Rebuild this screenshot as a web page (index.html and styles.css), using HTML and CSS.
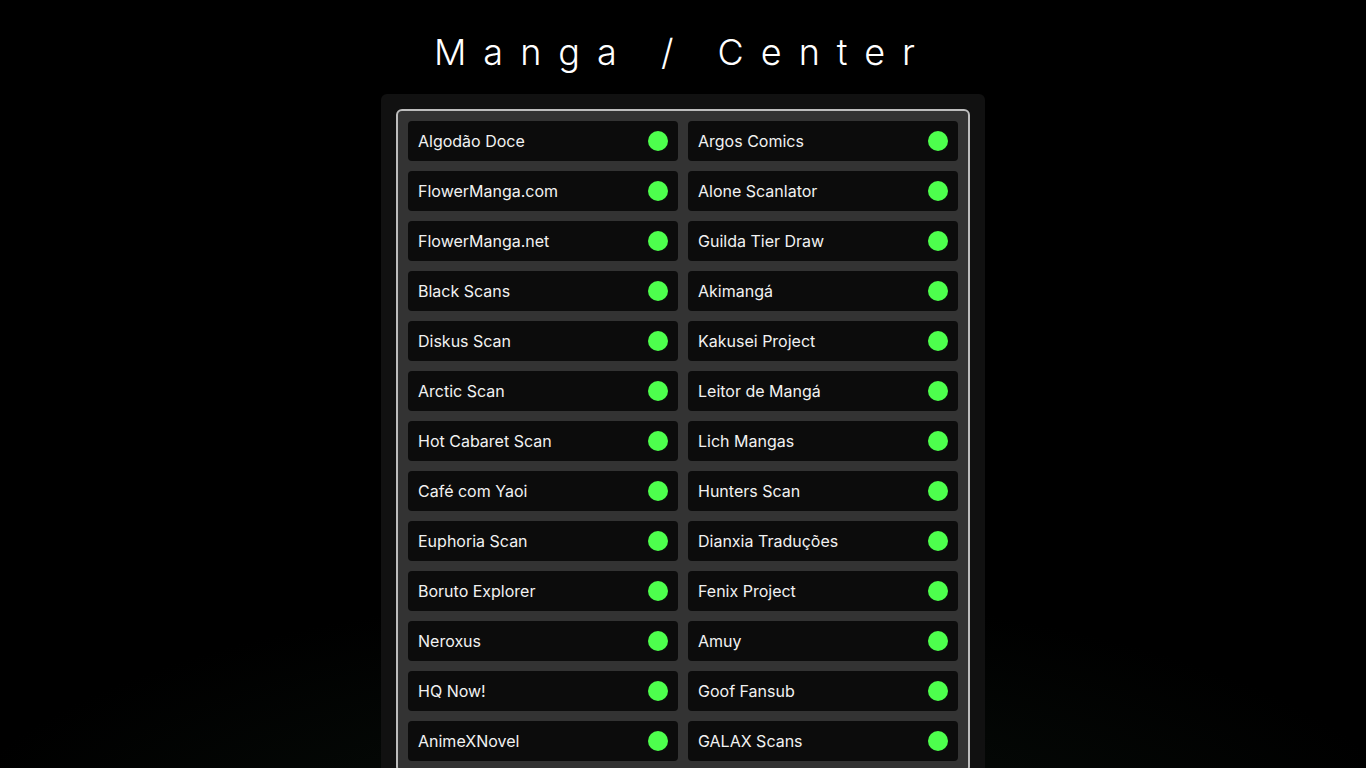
FILE: index.html
```html
<!DOCTYPE html>
<html lang="pt-BR">
<head>
<meta charset="utf-8">
<title>Manga / Center</title>
<link rel="stylesheet" href="styles.css">
</head>
<body>
<header class="header"><h1 class="title">Manga / Center</h1></header>
<main class="panel">
  <div class="box">
    <ul class="grid">
      <li class="item"><span class="name">Algodão Doce</span><span class="dot"></span></li>
      <li class="item"><span class="name">Argos Comics</span><span class="dot"></span></li>
      <li class="item"><span class="name">FlowerManga.com</span><span class="dot"></span></li>
      <li class="item"><span class="name">Alone Scanlator</span><span class="dot"></span></li>
      <li class="item"><span class="name">FlowerManga.net</span><span class="dot"></span></li>
      <li class="item"><span class="name">Guilda Tier Draw</span><span class="dot"></span></li>
      <li class="item"><span class="name">Black Scans</span><span class="dot"></span></li>
      <li class="item"><span class="name">Akimangá</span><span class="dot"></span></li>
      <li class="item"><span class="name">Diskus Scan</span><span class="dot"></span></li>
      <li class="item"><span class="name">Kakusei Project</span><span class="dot"></span></li>
      <li class="item"><span class="name">Arctic Scan</span><span class="dot"></span></li>
      <li class="item"><span class="name">Leitor de Mangá</span><span class="dot"></span></li>
      <li class="item"><span class="name">Hot Cabaret Scan</span><span class="dot"></span></li>
      <li class="item"><span class="name">Lich Mangas</span><span class="dot"></span></li>
      <li class="item"><span class="name">Café com Yaoi</span><span class="dot"></span></li>
      <li class="item"><span class="name">Hunters Scan</span><span class="dot"></span></li>
      <li class="item"><span class="name">Euphoria Scan</span><span class="dot"></span></li>
      <li class="item"><span class="name">Dianxia Traduções</span><span class="dot"></span></li>
      <li class="item"><span class="name">Boruto Explorer</span><span class="dot"></span></li>
      <li class="item"><span class="name">Fenix Project</span><span class="dot"></span></li>
      <li class="item"><span class="name">Neroxus</span><span class="dot"></span></li>
      <li class="item"><span class="name">Amuy</span><span class="dot"></span></li>
      <li class="item"><span class="name">HQ Now!</span><span class="dot"></span></li>
      <li class="item"><span class="name">Goof Fansub</span><span class="dot"></span></li>
      <li class="item"><span class="name">AnimeXNovel</span><span class="dot"></span></li>
      <li class="item"><span class="name">GALAX Scans</span><span class="dot"></span></li>
    </ul>
  </div>
</main>
</body>
</html>
```
FILE: styles.css
```css
* { box-sizing: border-box; }
html, body { margin: 0; padding: 0; }
body {
  min-height: 100vh;
  background-color: #000;
  background-image: radial-gradient(ellipse 55% 35% at 50% 112%, rgba(14, 26, 18, 0.6), rgba(0, 0, 0, 0) 100%);
  background-attachment: fixed;
  font-family: "Inter", "Noto Sans", sans-serif;
  color: #f0f0f0;
}
.header {
  padding-top: 30px;
  margin-bottom: 20px;
  text-align: center;
}
.title {
  margin: 0;
  font-size: 36px;
  line-height: 44px;
  font-weight: 300;
  letter-spacing: 17px;
  color: #fff;
}
.panel {
  width: 604px;
  margin: 0 auto;
  padding: 15px;
  background: #111111;
  border-radius: 6px;
}
.box {
  border: 2px solid #bdbdbd;
  border-radius: 6px;
  background: #333333;
  padding: 10px;
}
.grid {
  list-style: none;
  margin: 0;
  padding: 0;
  display: grid;
  grid-template-columns: 270px 270px;
  gap: 10px;
}
.item {
  height: 40px;
  background: #0c0c0c;
  border-radius: 4px;
  display: flex;
  align-items: center;
  justify-content: space-between;
  padding: 0 10px;
}
.name {
  font-size: 16px;
  color: #f2f2f2;
}
.dot {
  width: 20px;
  height: 20px;
  border-radius: 50%;
  background: #4dff4d;
}
```
